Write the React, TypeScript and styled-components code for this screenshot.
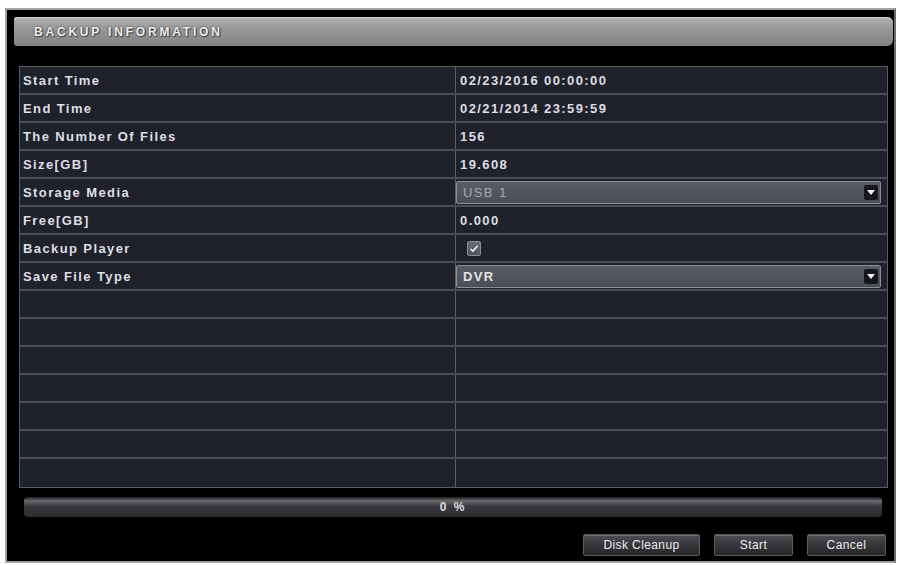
import React from 'react'
import styled, { createGlobalStyle } from 'styled-components'

const GlobalStyle = createGlobalStyle`
  html, body {
    margin: 0;
    padding: 0;
    background: #fff;
  }
  body {
    font-family: "Liberation Sans", Arial, sans-serif;
  }
`

interface IRow {
  label: string
  value?: string
  kind?: 'text' | 'select' | 'check'
  muted?: boolean
}

const rows: IRow[] = [
  { label: 'Start Time', value: '02/23/2016 00:00:00' },
  { label: 'End Time', value: '02/21/2014 23:59:59' },
  { label: 'The Number Of Files', value: '156' },
  { label: 'Size[GB]', value: '19.608' },
  { label: 'Storage Media', value: 'USB 1', kind: 'select', muted: true },
  { label: 'Free[GB]', value: '0.000' },
  { label: 'Backup Player', kind: 'check' },
  { label: 'Save File Type', value: 'DVR', kind: 'select' }
]

const EMPTY_ROWS = 7

const Page = styled.div`
  padding: 8px 3px 2px 5px;
`
const Window = styled.div`
  width: 887px;
  height: 551px;
  border: 2px solid #a3a3a3;
  border-right-color: #6d6d6d;
  background: #000;
  display: flex;
  flex-direction: column;
`
const TitleBar = styled.div`
  margin: 7px 1px 0 7px;
  height: 29px;
  border-radius: 3px 6px 6px 3px;
  background: linear-gradient(#b5b5b5 0%, #9e9e9e 30%, #8d8d8d 70%, #828282 100%);
  box-shadow: inset 0 1px 0 #d2d2d2;
  display: flex;
  align-items: center;
  padding-left: 20px;
`
const Title = styled.span`
  color: #ededed;
  font-size: 12px;
  font-weight: 700;
  letter-spacing: 2.8px;
  text-transform: uppercase;
  text-shadow: 0 0 2px #333, 1px 1px 1px #444;
`
const Table = styled.div`
  margin: 20px 6px 0 12px;
  border: 1px solid #5a5c66;
  background: #1f212b;
  display: flex;
  flex-direction: column;
`
const Row = styled.div`
  height: 28px;
  box-sizing: border-box;
  display: grid;
  grid-template-columns: 436px 1fr;
  border-bottom: 2px solid #4a4c57;
  &:last-child {
    border-bottom: none;
  }
`
const Label = styled.div`
  display: flex;
  align-items: center;
  padding-left: 3px;
  color: #dedee3;
  font-size: 13px;
  font-weight: 700;
  letter-spacing: 1.4px;
  border-right: 1px solid #5c5e68;
`
const Value = styled.div`
  display: flex;
  align-items: center;
  padding-left: 4px;
  padding-right: 6px;
  color: #dedee3;
  font-size: 13px;
  font-weight: 700;
  letter-spacing: 1.4px;
`
const Select = styled.div<{ $muted?: boolean }>`
  flex: 1;
  height: 23px;
  margin-left: -4px;
  box-sizing: border-box;
  border: 1px solid #8d9097;
  border-radius: 2px;
  background: linear-gradient(#5a5d65, #4b4e56);
  display: flex;
  align-items: center;
  justify-content: space-between;
  padding: 0 2px 0 6px;
  color: ${p => (p.$muted ? '#a9abb1' : '#e2e2e6')};
  font-weight: ${p => (p.$muted ? 400 : 700)};
`
const Arrow = styled.span`
  width: 14px;
  height: 15px;
  border-radius: 2px;
  background: #16171b;
  display: flex;
  align-items: center;
  justify-content: center;
`
const CheckBox = styled.span`
  width: 12px;
  height: 13px;
  margin-left: 7px;
  border: 1px solid #8a8c94;
  border-radius: 2px;
  background: linear-gradient(#6a6d75, #50535b);
  display: flex;
  align-items: center;
  justify-content: center;
`
const Progress = styled.div`
  margin: 9px 12px 0 17px;
  height: 20px;
  border-radius: 4px;
  background: linear-gradient(#1c1c1e 0%, #6a6a6e 20%, #3a3a3e 45%, #2c2c30 100%);
  display: flex;
  align-items: center;
  justify-content: center;
  color: #dcdcdc;
  font-size: 12px;
  font-weight: 700;
  letter-spacing: 2px;
`
const ButtonBar = styled.div`
  margin: 17px 8px 0 0;
  display: flex;
  justify-content: flex-end;
  gap: 14px;
`
const Button = styled.button<{ $w: number }>`
  width: ${p => p.$w}px;
  height: 22px;
  padding: 0;
  border: 1px solid #5c5c60;
  border-radius: 2px;
  background: linear-gradient(#4d4d51 0%, #37373b 50%, #262629 100%);
  box-shadow: inset 0 1px 0 #6c6c70;
  color: #ececec;
  font-family: "Liberation Sans", Arial, sans-serif;
  font-size: 12px;
  letter-spacing: 0.4px;
`

const DownArrow = () => (
  <svg width="8" height="5" viewBox="0 0 8 5">
    <path d="M0 0h8L4 5z" fill="#f2f2f2" />
  </svg>
)

const Tick = () => (
  <svg width="10" height="9" viewBox="0 0 10 9">
    <path d="M1.5 4.8l2.4 2.4L8.6 1.8" stroke="#f4f4f4" strokeWidth="1.6" fill="none" />
  </svg>
)

const renderValue = (row: IRow) => {
  if (row.kind === 'select') {
    return (
      <Select $muted={row.muted}>
        {row.value}
        <Arrow>
          <DownArrow />
        </Arrow>
      </Select>
    )
  }
  if (row.kind === 'check') {
    return (
      <CheckBox>
        <Tick />
      </CheckBox>
    )
  }
  return row.value
}

export default function App() {
  return (
    <Page>
      <GlobalStyle />
      <Window>
        <TitleBar>
          <Title>Backup Information</Title>
        </TitleBar>
        <Table>
          {rows.map(row => (
            <Row key={row.label}>
              <Label>{row.label}</Label>
              <Value>{renderValue(row)}</Value>
            </Row>
          ))}
          {Array.from({ length: EMPTY_ROWS }, (_, i) => (
            <Row key={'empty' + i}>
              <Label />
              <Value />
            </Row>
          ))}
        </Table>
        <Progress>0 %</Progress>
        <ButtonBar>
          <Button $w={117}>Disk Cleanup</Button>
          <Button $w={79}>Start</Button>
          <Button $w={79}>Cancel</Button>
        </ButtonBar>
      </Window>
    </Page>
  )
}
